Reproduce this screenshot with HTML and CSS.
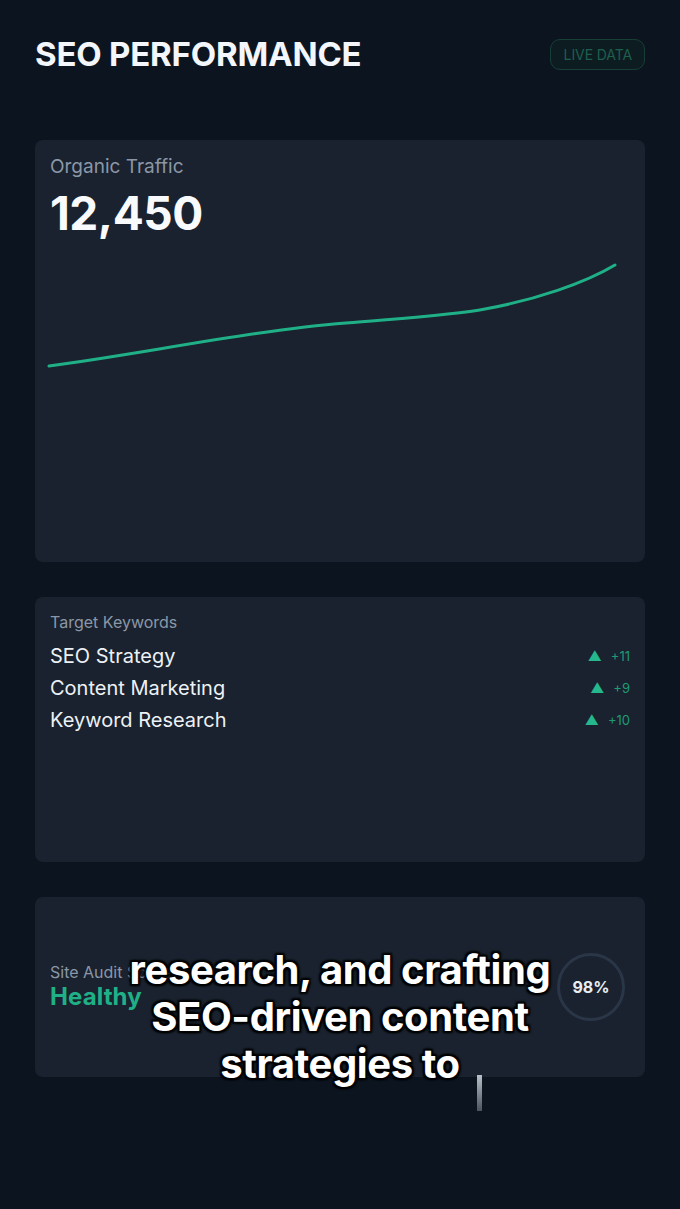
FILE: index.html
```html
<!DOCTYPE html>
<html lang="en">
<head>
    <meta charset="UTF-8">
    <meta name="viewport" content="width=device-width, initial-scale=1.0">
    <title>SEO Performance</title>
    <link rel="stylesheet" href="styles.css">
</head>
<body>

    <main class="dashboard">
        <header class="top-bar">
            <h1 class="page-title">SEO PERFORMANCE</h1>
            <span class="live-badge">LIVE DATA</span>
        </header>

        <!-- Organic traffic -->
        <section class="card traffic-card">
            <p class="card-label">Organic Traffic</p>
            <p class="traffic-value">12,450</p>
            <svg class="traffic-chart" viewBox="0 0 610 130" preserveAspectRatio="none">
                <path d="M14 111 C 100 100, 220 75, 311 68 C 370 63, 420 60, 450 54 C 500 45, 550 28, 580 10"
                      fill="none" stroke="#20b087" stroke-width="3" stroke-linecap="round"/>
            </svg>
        </section>

        <!-- Keywords -->
        <section class="card keywords-card">
            <p class="card-label small">Target Keywords</p>
            <ul class="keyword-list">
                <li class="keyword-row"><span>SEO Strategy</span><span class="trend"><span class="arrow">▲</span>+11</span></li>
                <li class="keyword-row"><span>Content Marketing</span><span class="trend"><span class="arrow">▲</span>+9</span></li>
                <li class="keyword-row"><span>Keyword Research</span><span class="trend"><span class="arrow">▲</span>+10</span></li>
            </ul>
        </section>

        <!-- Site audit -->
        <section class="card audit-card">
            <div class="audit-info">
                <p class="card-label small">Site Audit Score</p>
                <p class="audit-status">Healthy</p>
            </div>
            <div class="score-ring">
                <span>98%</span>
            </div>
        </section>

        <div class="caption">research, and crafting<br>SEO-driven content<br>strategies to</div>
        <div class="cursor-bar"></div>
    </main>

</body>
</html>
```

FILE: styles.css
```css
/* General */
body {
    font-family: Inter, "Noto Sans", sans-serif;
    margin: 0;
    padding: 0;
    background-color: #0c1420;
    color: #eef2f6;
}
p, ul, h1 {
    margin: 0;
    padding: 0;
}

.dashboard {
    position: relative;
    padding: 36px 35px 0;
    min-height: 1209px;
    box-sizing: border-box;
}

/* Header */
.top-bar {
    display: flex;
    justify-content: space-between;
    align-items: center;
    height: 36px;
}
.page-title {
    font-size: 33px;
    font-weight: 700;
    letter-spacing: -0.2px;
    color: #f3f6fa;
}
.live-badge {
    font-size: 14px;
    color: #1e5f4e;
    border: 1px solid #173f36;
    background: #0d1c20;
    border-radius: 10px;
    padding: 6px 12px 6px 13px;
    letter-spacing: -0.1px;
}

/* Cards */
.card {
    background: #19222e;
    border-radius: 8px;
    padding: 14px 15px;
    margin-top: 35px;
    box-sizing: border-box;
}
.card-label {
    color: #8b97a7;
    font-size: 19px;
}
.card-label.small {
    font-size: 16px;
}

.traffic-card {
    margin-top: 68px;
    height: 422px;
    padding-top: 15px;
}
.traffic-value {
    font-size: 46px;
    font-weight: 700;
    letter-spacing: -0.5px;
    line-height: 52px;
    margin-top: 9px;
    color: #f8fafc;
}
.traffic-chart {
    display: block;
    width: 610px;
    height: 130px;
    margin: 16px 0 0 -15px;
}

.keywords-card {
    height: 265px;
    padding-top: 15px;
}
.keyword-list {
    list-style: none;
    margin-top: 8px;
}
.keyword-row {
    display: flex;
    justify-content: space-between;
    align-items: center;
    font-size: 20px;
    line-height: 32px;
    color: #edf1f5;
}
.trend {
    font-size: 13px;
    color: #1f9a76;
}
.arrow {
    color: #24b88c;
    font-size: 14px;
    margin-right: 9px;
}

.audit-card {
    height: 180px;
    display: flex;
    justify-content: space-between;
    align-items: center;
    padding: 0 20px 0 15px;
}
.audit-status {
    color: #20b087;
    font-size: 24px;
    font-weight: 700;
    line-height: 30px;
    letter-spacing: 0.1px;
}
.score-ring {
    width: 62px;
    height: 62px;
    border: 3px solid #2a3647;
    border-radius: 50%;
    display: flex;
    justify-content: center;
    align-items: center;
    font-size: 16px;
    font-weight: 700;
    color: #e9eef3;
}

/* Video caption overlay */
.caption {
    position: absolute;
    left: 0;
    right: 0;
    top: 946px;
    text-align: center;
    font-size: 40px;
    font-weight: 700;
    line-height: 47px;
    letter-spacing: -0.4px;
    color: #ffffff;
    text-shadow: 0 0 2px #000, 2px 2px 2px #000, -2px -2px 2px #000, 2px -2px 2px #000, -2px 2px 2px #000;
}
.cursor-bar {
    position: absolute;
    left: 477px;
    top: 1075px;
    width: 5px;
    height: 36px;
    background: linear-gradient(#b9c0c8, #4b535d);
}
```
